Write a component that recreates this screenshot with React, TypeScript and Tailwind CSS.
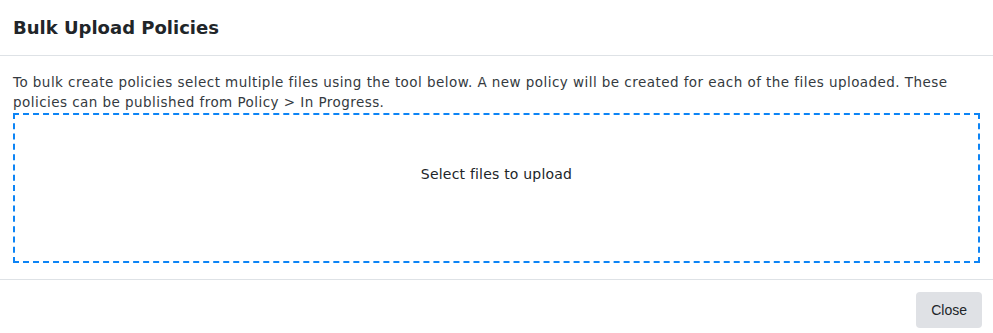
export default function App() {
  return (
    <div className="w-[993px] h-[333px] bg-white text-[#212529]" style={{ fontFamily: '"DejaVu Sans", sans-serif' }}>
      <header className="h-[56px] px-[13px] flex items-center border-b border-[#dee2e6]">
        <h1 className="text-[18px] font-bold text-[#212529]">Bulk Upload Policies</h1>
      </header>
      <div className="px-[13px] pt-[17px] pb-[16px] border-b border-[#dee2e6]">
        <p className="text-[13.5px] leading-[19.5px] tracking-[0.45px] text-[#343a40]">
          To bulk create policies select multiple files using the tool below. A new policy will be created for each of the files uploaded. These policies can be published from Policy &gt; In Progress.
        </p>
        <div className="mt-[1px] h-[150px] border-2 border-dashed border-[#0d84f5] flex justify-center pt-[49px]">
          <span className="text-[14px] leading-[20px] tracking-[0.2px] text-[#212529]">Select files to upload</span>
        </div>
      </div>
      <footer className="flex justify-end px-[11px] pt-[12px]">
        <button
          type="button"
          className="h-[36px] px-[15px] rounded-[4px] bg-[#dfe1e5] text-[14px] text-[#212529]"
          style={{ fontFamily: '"Liberation Sans", Arial, sans-serif' }}
        >
          Close
        </button>
      </footer>
    </div>
  )
}
